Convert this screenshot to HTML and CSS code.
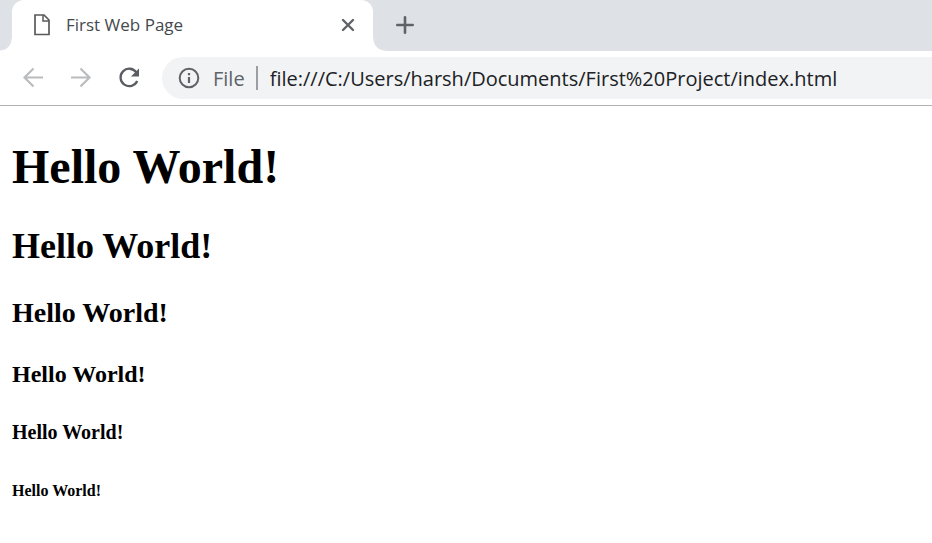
FILE: index.html
```html
<!DOCTYPE html>
<html lang="en">
<head>
<meta charset="utf-8">
<title>First Web Page</title>
<link rel="stylesheet" href="styles.css">
</head>
<body>
<header class="browser">
  <div class="tab-strip">
    <div class="tab">
      <svg class="tab-icon" width="16" height="22" viewBox="0 0 16 22" fill="none" stroke="#5a5a5a" stroke-width="1.700" aria-hidden="true"><path d="M1 1H10L15 6V20.500H1Z"/><path d="M9 1V7H15" stroke-width="1.500"/></svg>
      <span class="tab-title">First Web Page</span>
      <button class="icon-button" type="button" aria-label="Close tab"><svg width="14" height="14" viewBox="0 0 14 14" fill="none" stroke="#5f6368" stroke-width="2.400" stroke-linecap="round"><path d="M2 2L12 12M12 2L2 12"/></svg></button>
    </div>
    <button class="icon-button new-tab" type="button" aria-label="New tab"><svg width="18" height="18" viewBox="0 0 18 18" fill="none" stroke="#5f6368" stroke-width="2.600" stroke-linecap="round"><path d="M9 1.300V16.700M1.300 9H16.700"/></svg></button>
  </div>
  <div class="toolbar">
    <nav class="nav-buttons">
      <button class="icon-button" type="button" aria-label="Back"><svg width="24" height="24" viewBox="0 0 24 24" fill="none" stroke="#babcbe" stroke-width="2.200"><path d="M23 11.500H5M13.500 2.500L4.500 11.500L13.500 20.500"/></svg></button>
      <button class="icon-button" type="button" aria-label="Forward"><svg width="24" height="24" viewBox="0 0 24 24" fill="none" stroke="#babcbe" stroke-width="2.200"><path d="M2 11.500H20M11.500 2.500L20.500 11.500L11.500 20.500"/></svg></button>
      <button class="icon-button" type="button" aria-label="Reload"><svg width="24" height="24" viewBox="0 0 24 24"><path d="M18.300 6.300A8.700 8.700 0 1 0 19.200 15" fill="none" stroke="#5a5d61" stroke-width="2.300"/><path d="M21 2.500V10.500H13Z" fill="#5a5d61"/></svg></button>
    </nav>
    <div class="address">
      <svg width="22" height="22" viewBox="0 0 22 22" fill="none" stroke="#5f6368" stroke-width="2" aria-hidden="true"><circle cx="11" cy="11" r="9.300"/><path d="M11 10V16M11 6V8.200" stroke-width="2.200"/></svg>
      <label class="scheme" for="url">File</label>
      <input class="url" id="url" type="text" value="file:///C:/Users/harsh/Documents/First%20Project/index.html" spellcheck="false">
    </div>
  </div>
</header>
<main class="page">
  <h1>Hello World!</h1>
  <h2>Hello World!</h2>
  <h3>Hello World!</h3>
  <h4>Hello World!</h4>
  <h5>Hello World!</h5>
  <h6>Hello World!</h6>
</main>
</body>
</html>
```
FILE: styles.css
```css
* {
  box-sizing: border-box;
}

body {
  margin: 0;
  background: #fff;
  color: #000;
  font-family: "Liberation Serif", "Times New Roman", serif;
}

.browser {
  border-bottom: 1px solid #b1b1b3;
  font-family: "Open Sans", "Segoe UI", sans-serif;
}

.tab-strip {
  display: flex;
  align-items: stretch;
  height: 51px;
  padding-left: 12px;
  background: #dee1e6;
}

.tab {
  position: relative;
  display: flex;
  align-items: center;
  flex: 0 1 361px;
  gap: 16px;
  padding: 0 18px 2px 22px;
  border-radius: 12px 12px 0 0;
  background: #fff;
}

.tab::before,
.tab::after {
  content: "";
  position: absolute;
  bottom: 0;
  width: 12px;
  height: 12px;
}

.tab::before {
  right: 100%;
  background: radial-gradient(circle at 0 0, transparent 11px, #fff 12px);
}

.tab::after {
  left: 100%;
  background: radial-gradient(circle at 100% 0, transparent 11px, #fff 12px);
}

.tab-title {
  flex: 1;
  color: #45494e;
  font-size: 17px;
  line-height: 24px;
  white-space: nowrap;
}

.icon-button {
  display: flex;
  padding: 0;
  border: 0;
  background: none;
}

.new-tab {
  align-items: center;
  padding: 0 23px 2px;
}

.toolbar {
  display: flex;
  align-items: center;
  gap: 20px;
  padding: 6px 0 6px 20px;
}

.nav-buttons {
  display: flex;
  gap: 25px;
}

.address {
  display: flex;
  align-items: center;
  flex: 1;
  height: 42px;
  padding-left: 16px;
  border-radius: 21px 0 0 21px;
  background: #f1f3f4;
  font-size: 20px;
}

.scheme {
  margin-left: 13px;
  padding: 2px 11px 0 0;
  border-right: 2px solid #9b9ea2;
  color: #5f6368;
  line-height: 22px;
}

.url {
  flex: 1;
  min-width: 0;
  padding: 0 0 0 12px;
  border: 0;
  background: none;
  color: #202124;
  font: inherit;
}

.page {
  padding: 0 12px;
}

h1 {
  margin: 33px 0 31px;
  font-size: 48px;
}

h2 {
  margin: 30px 0;
  font-size: 36px;
}

h3 {
  margin: 28px 0;
  font-size: 28px;
}

h4 {
  margin: 32px 0;
  font-size: 24px;
}

h5 {
  margin: 33px 0;
  font-size: 20px;
}

h6 {
  margin: 38px 0;
  font-size: 16px;
}
```
